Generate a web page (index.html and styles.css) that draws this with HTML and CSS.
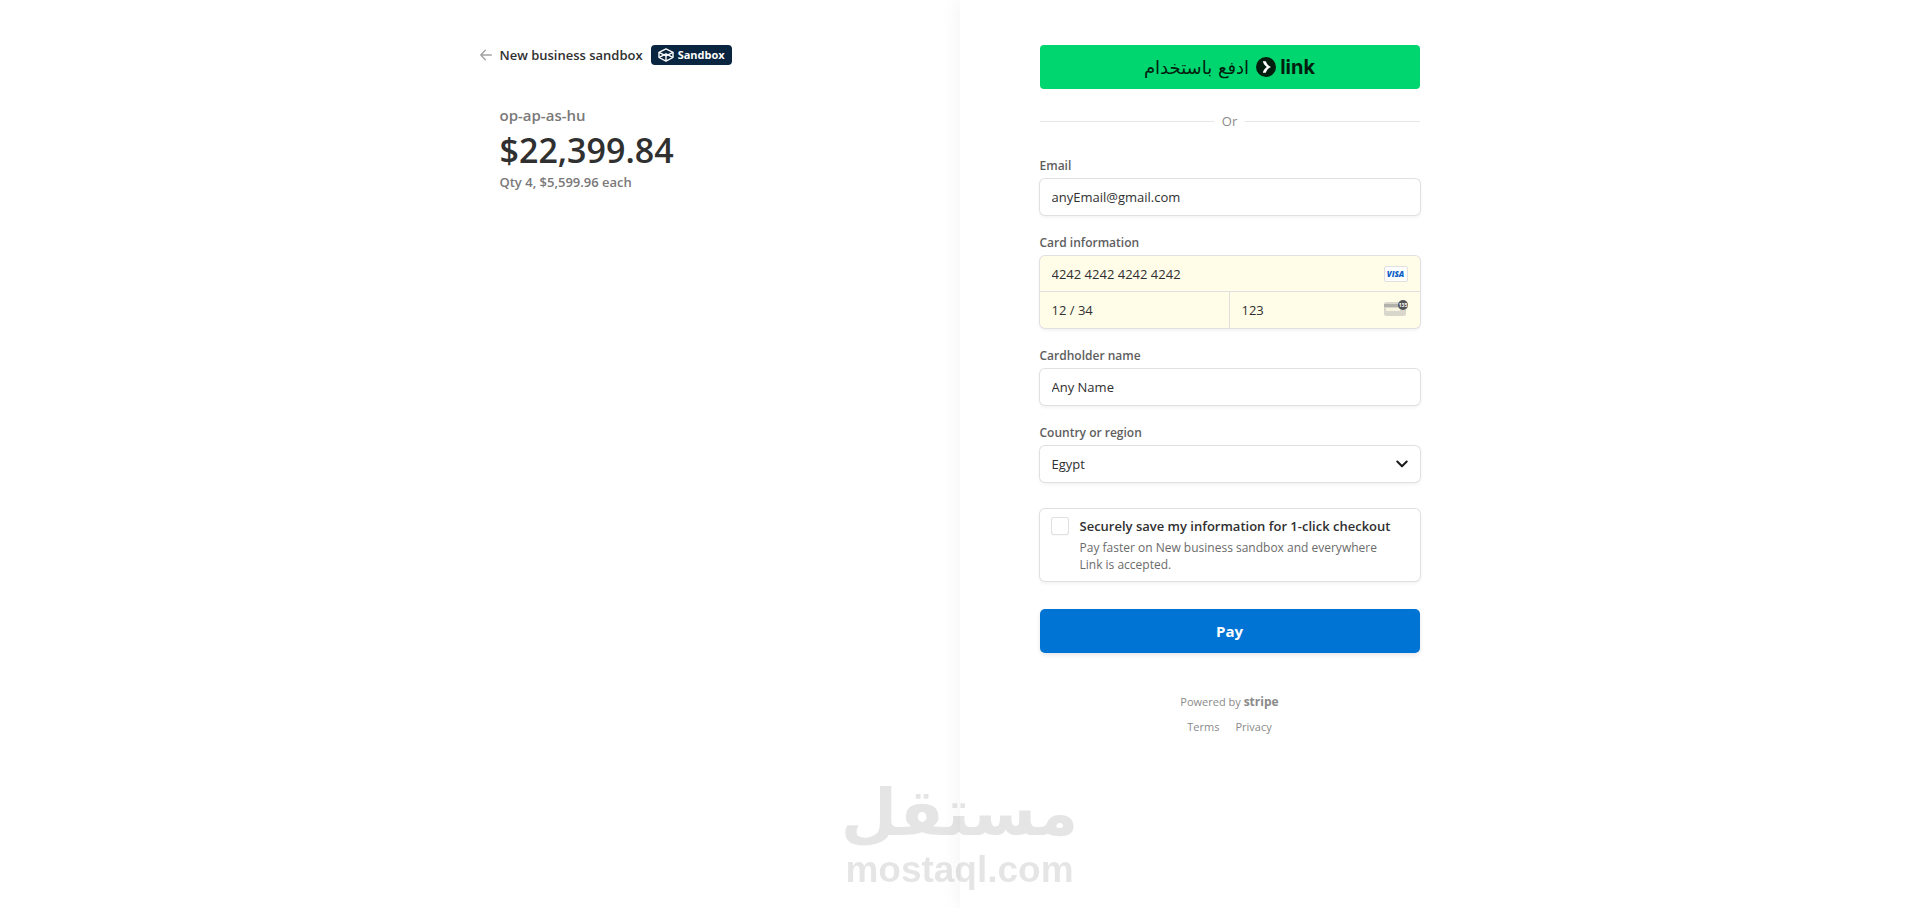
FILE: index.html
```html
<!DOCTYPE html>
<html lang="en">
<head>
  <meta charset="UTF-8" />
  <title>New business sandbox</title>
  <meta name="viewport" content="width=device-width, initial-scale=1.0" />
  <link rel="stylesheet" href="styles.css">
</head>
<body>

  <main class="checkout">
    <!-- Order summary -->
    <section class="summary">
      <div class="summary-inner">
        <header class="business">
          <a class="back" href="#" aria-label="Back">
            <svg width="12" height="12" viewBox="0 0 12 12" fill="none" stroke="currentColor" stroke-width="1.4" stroke-linecap="round" stroke-linejoin="round">
              <path d="M11.3 6H.8M5.3 1.2L.8 6l4.5 4.8" />
            </svg>
          </a>
          <span class="business-name">New business sandbox</span>
          <span class="badge">
            <svg width="16" height="14" viewBox="0 0 16 14" fill="none" stroke="currentColor" stroke-width="1.4" stroke-linejoin="round">
              <path d="M8 .9l7 3.400v5.200L8 13.100 1 9.500V4.300z" />
              <path d="M1 4.300l7 3.500 7-3.500M8 7.800v5.300M1.200 9.300L8 5.800l6.800 3.500" />
            </svg>
            Sandbox
          </span>
        </header>

        <div class="product">op-ap-as-hu</div>
        <h1 class="price">$22,399.84</h1>
        <div class="qty">Qty 4, $5,599.96 each</div>
      </div>
    </section>

    <!-- Payment form -->
    <section class="payment">
      <form class="payment-form">
        <button type="button" class="link-btn">
          <span class="link-logo">
            <svg width="20" height="20" viewBox="0 0 20 20">
              <circle cx="10" cy="10" r="10" fill="#011e0f" />
              <path d="M6.800 4.300h3c.8 2.500 2.600 4.600 5.200 5.700-2.600 1.100-4.400 3.200-5.200 5.700h-3c.6-2.300 2-4.300 4-5.700-2-1.400-3.400-3.400-4-5.700z" fill="#fff" />
            </svg>
            <span class="link-word">link</span>
          </span>
          <span class="link-text" lang="ar" dir="rtl">ادفع باستخدام</span>
        </button>

        <div class="divider">Or</div>

        <div class="field">
          <label for="email">Email</label>
          <input class="box" type="text" id="email" value="anyEmail@gmail.com" />
        </div>

        <div class="field">
          <label for="cardNumber">Card information</label>
          <div class="card-box">
            <div class="card-cell card-number">
              <input type="text" id="cardNumber" value="4242 4242 4242 4242" />
              <span class="visa">VISA</span>
            </div>
            <div class="card-cell card-expiry">
              <input type="text" id="expiry" aria-label="Expiration" value="12 / 34" />
            </div>
            <div class="card-cell">
              <input type="text" id="cvc" aria-label="CVC" value="123" />
              <svg class="cvc-icon" width="24" height="16" viewBox="0 0 24 16">
                <rect y="2" width="22" height="14" rx="2" fill="#d9d7cb" />
                <rect y="4" width="22" height="3" fill="#b3b2aa" />
                <rect x="2" y="8" width="14" height="3" fill="#f7f4df" />
                <circle cx="19" cy="5" r="5" fill="#545454" />
                <text x="19" y="7" text-anchor="middle">135</text>
              </svg>
            </div>
          </div>
        </div>

        <div class="field">
          <label for="cardholder">Cardholder name</label>
          <input class="box" type="text" id="cardholder" value="Any Name" />
        </div>

        <div class="field">
          <label for="country">Country or region</label>
          <div class="select-wrap">
            <select class="box" id="country">
              <option>Egypt</option>
            </select>
            <svg class="chevron" width="12" height="12" viewBox="0 0 12 12" fill="none" stroke="currentColor" stroke-width="2" stroke-linecap="round" stroke-linejoin="round">
              <path d="M1.300 3.500L6 8.200l4.700-4.700" />
            </svg>
          </div>
        </div>

        <div class="save-box">
          <input type="checkbox" id="saveInfo" />
          <div>
            <label for="saveInfo">Securely save my information for 1-click checkout</label>
            <p>Pay faster on New business sandbox and everywhere Link is accepted.</p>
          </div>
        </div>

        <button type="submit" class="pay-btn">Pay</button>
      </form>

      <footer class="footer">
        <div>Powered by <span class="stripe">stripe</span></div>
        <nav>
          <a href="#">Terms</a>
          <a href="#">Privacy</a>
        </nav>
      </footer>
    </section>
  </main>

  <div class="watermark">
    <div class="watermark-ar" lang="ar" dir="rtl">مستقل</div>
    <div class="watermark-en">mostaql.com</div>
  </div>

</body>
</html>
```
FILE: styles.css
```css
* {
  box-sizing: border-box;
}

body {
  margin: 0;
  background: #fff;
  color: #303030;
  font-family: "Open Sans", "Noto Sans", sans-serif;
  font-size: 13px;
  line-height: 20px;
}

input, select, button {
  font-family: inherit;
  font-size: inherit;
  color: inherit;
}

a {
  color: inherit;
  text-decoration: none;
}

.checkout {
  display: grid;
  grid-template-columns: 1fr 1fr;
  min-height: 100vh;
}

/* Order summary */
.summary {
  display: flex;
  justify-content: flex-end;
  padding: 45px 80px 0 24px;
}

.summary-inner {
  width: 100%;
  max-width: 400px;
  padding-left: 20px;
}

.business {
  display: flex;
  align-items: center;
  margin: 0 0 40px -20px;
  font-weight: 600;
}

.back {
  display: flex;
  width: 20px;
  color: #a3a3a3;
}

.badge {
  display: flex;
  align-items: center;
  gap: 4px;
  height: 20px;
  margin-left: 8px;
  padding: 0 7px;
  border-radius: 4px;
  background: #0a2540;
  color: #fff;
  font-size: 11px;
  font-weight: 700;
}

.product {
  color: #7a7878;
  font-size: 15px;
  font-weight: 600;
}

.price {
  margin: 4px 0 0;
  font-size: 34px;
  font-weight: 600;
  line-height: 43px;
}

.qty {
  color: #7a7878;
  font-weight: 600;
}

/* Payment form */
.payment {
  padding: 45px 24px 40px 80px;
  box-shadow: -4px 0 16px rgba(0, 0, 0, 0.04);
}

.payment-form, .footer {
  max-width: 380px;
}

.link-btn, .pay-btn {
  display: flex;
  align-items: center;
  justify-content: center;
  width: 100%;
  height: 44px;
  padding: 0;
  border: none;
  cursor: pointer;
}

.link-btn {
  flex-direction: row-reverse;
  gap: 7px;
  border-radius: 4px;
  background: #00d66f;
  color: #011e0f;
}

.link-logo {
  display: flex;
  align-items: center;
  gap: 4px;
}

.link-word {
  font-family: Inter, sans-serif;
  font-size: 20px;
  font-weight: 700;
}

.link-text {
  font-family: "DejaVu Sans", sans-serif;
  font-size: 18px;
}

.divider {
  display: flex;
  align-items: center;
  gap: 8px;
  margin: 22px 0 24px;
  color: #8a8a8a;
}

.divider::before, .divider::after {
  content: "";
  flex: 1;
  height: 1px;
  background: #e6e6e6;
}

.field {
  margin-bottom: 17px;
}

.field label {
  display: block;
  margin-bottom: 2px;
  color: #5e5e5e;
  font-size: 12px;
  font-weight: 600;
  line-height: 22px;
}

.box, .card-box, .save-box {
  width: 100%;
  border: none;
  border-radius: 5px;
  background: #fff;
  box-shadow: 0 0 0 1px #e0e0e0, 0 2px 4px rgba(0, 0, 0, 0.07);
}

.box {
  display: block;
  height: 36px;
  padding: 0 12px;
}

.card-box {
  display: grid;
  grid-template-columns: repeat(2, minmax(0, 1fr));
  overflow: hidden;
  background: #fffde8;
}

.card-cell {
  display: flex;
  align-items: center;
  height: 36px;
  padding: 0 12px;
}

.card-cell input {
  flex: 1;
  width: 100%;
  min-width: 0;
  padding: 0;
  border: none;
  background: none;
}

.card-number {
  grid-column: 1 / -1;
  border-bottom: 1px solid #e0e0e0;
}

.card-expiry {
  border-right: 1px solid #e0e0e0;
}

.visa {
  flex: none;
  width: 24px;
  height: 16px;
  border: 1px solid #e0e0e0;
  border-radius: 2px;
  background: #fff;
  color: #0a5fc4;
  font-size: 8px;
  font-style: italic;
  font-weight: 800;
  line-height: 14px;
  text-align: center;
}

.cvc-icon {
  flex: none;
  margin-bottom: 4px;
}

.cvc-icon text {
  fill: #fff;
  font-size: 5px;
  font-weight: 700;
}

.select-wrap {
  position: relative;
}

.select-wrap select {
  appearance: none;
}

.chevron {
  position: absolute;
  top: 12px;
  right: 12px;
  color: #1a1a1a;
  pointer-events: none;
}

.save-box {
  display: flex;
  gap: 12px;
  margin: 27px 0 28px;
  padding: 7px 24px 8px 12px;
}

.save-box input {
  appearance: none;
  flex: none;
  width: 16px;
  height: 16px;
  margin: 2px 0 0;
  border-radius: 2px;
  box-shadow: 0 0 0 1px #e0e0e0, 0 1px 2px rgba(0, 0, 0, 0.1);
}

.save-box label {
  display: block;
  font-weight: 600;
}

.save-box p {
  margin: 3px 0 0;
  color: #6b6b6b;
  font-size: 12px;
  line-height: 17px;
}

.pay-btn {
  border-radius: 5px;
  background: #0074d4;
  box-shadow: 0 2px 4px rgba(0, 0, 0, 0.1);
  color: #fff;
  font-size: 15px;
  font-weight: 700;
}

.footer {
  margin-top: 39px;
  color: #8a8a8a;
  font-size: 11px;
  text-align: center;
}

.footer nav {
  display: flex;
  justify-content: center;
  gap: 16px;
  margin-top: 5px;
}

.stripe {
  font-size: 12px;
  font-weight: 700;
}

/* Watermark over the bottom of the page */
.watermark {
  position: fixed;
  right: 0;
  bottom: 16px;
  left: 0;
  color: #000;
  font-weight: 700;
  text-align: center;
  opacity: 0.1;
  pointer-events: none;
}

.watermark-ar {
  font-family: "DejaVu Sans", sans-serif;
  font-size: 65px;
  line-height: 70px;
}

.watermark-en {
  font-family: "Liberation Sans", sans-serif;
  font-size: 37px;
  line-height: 44px;
}
```
